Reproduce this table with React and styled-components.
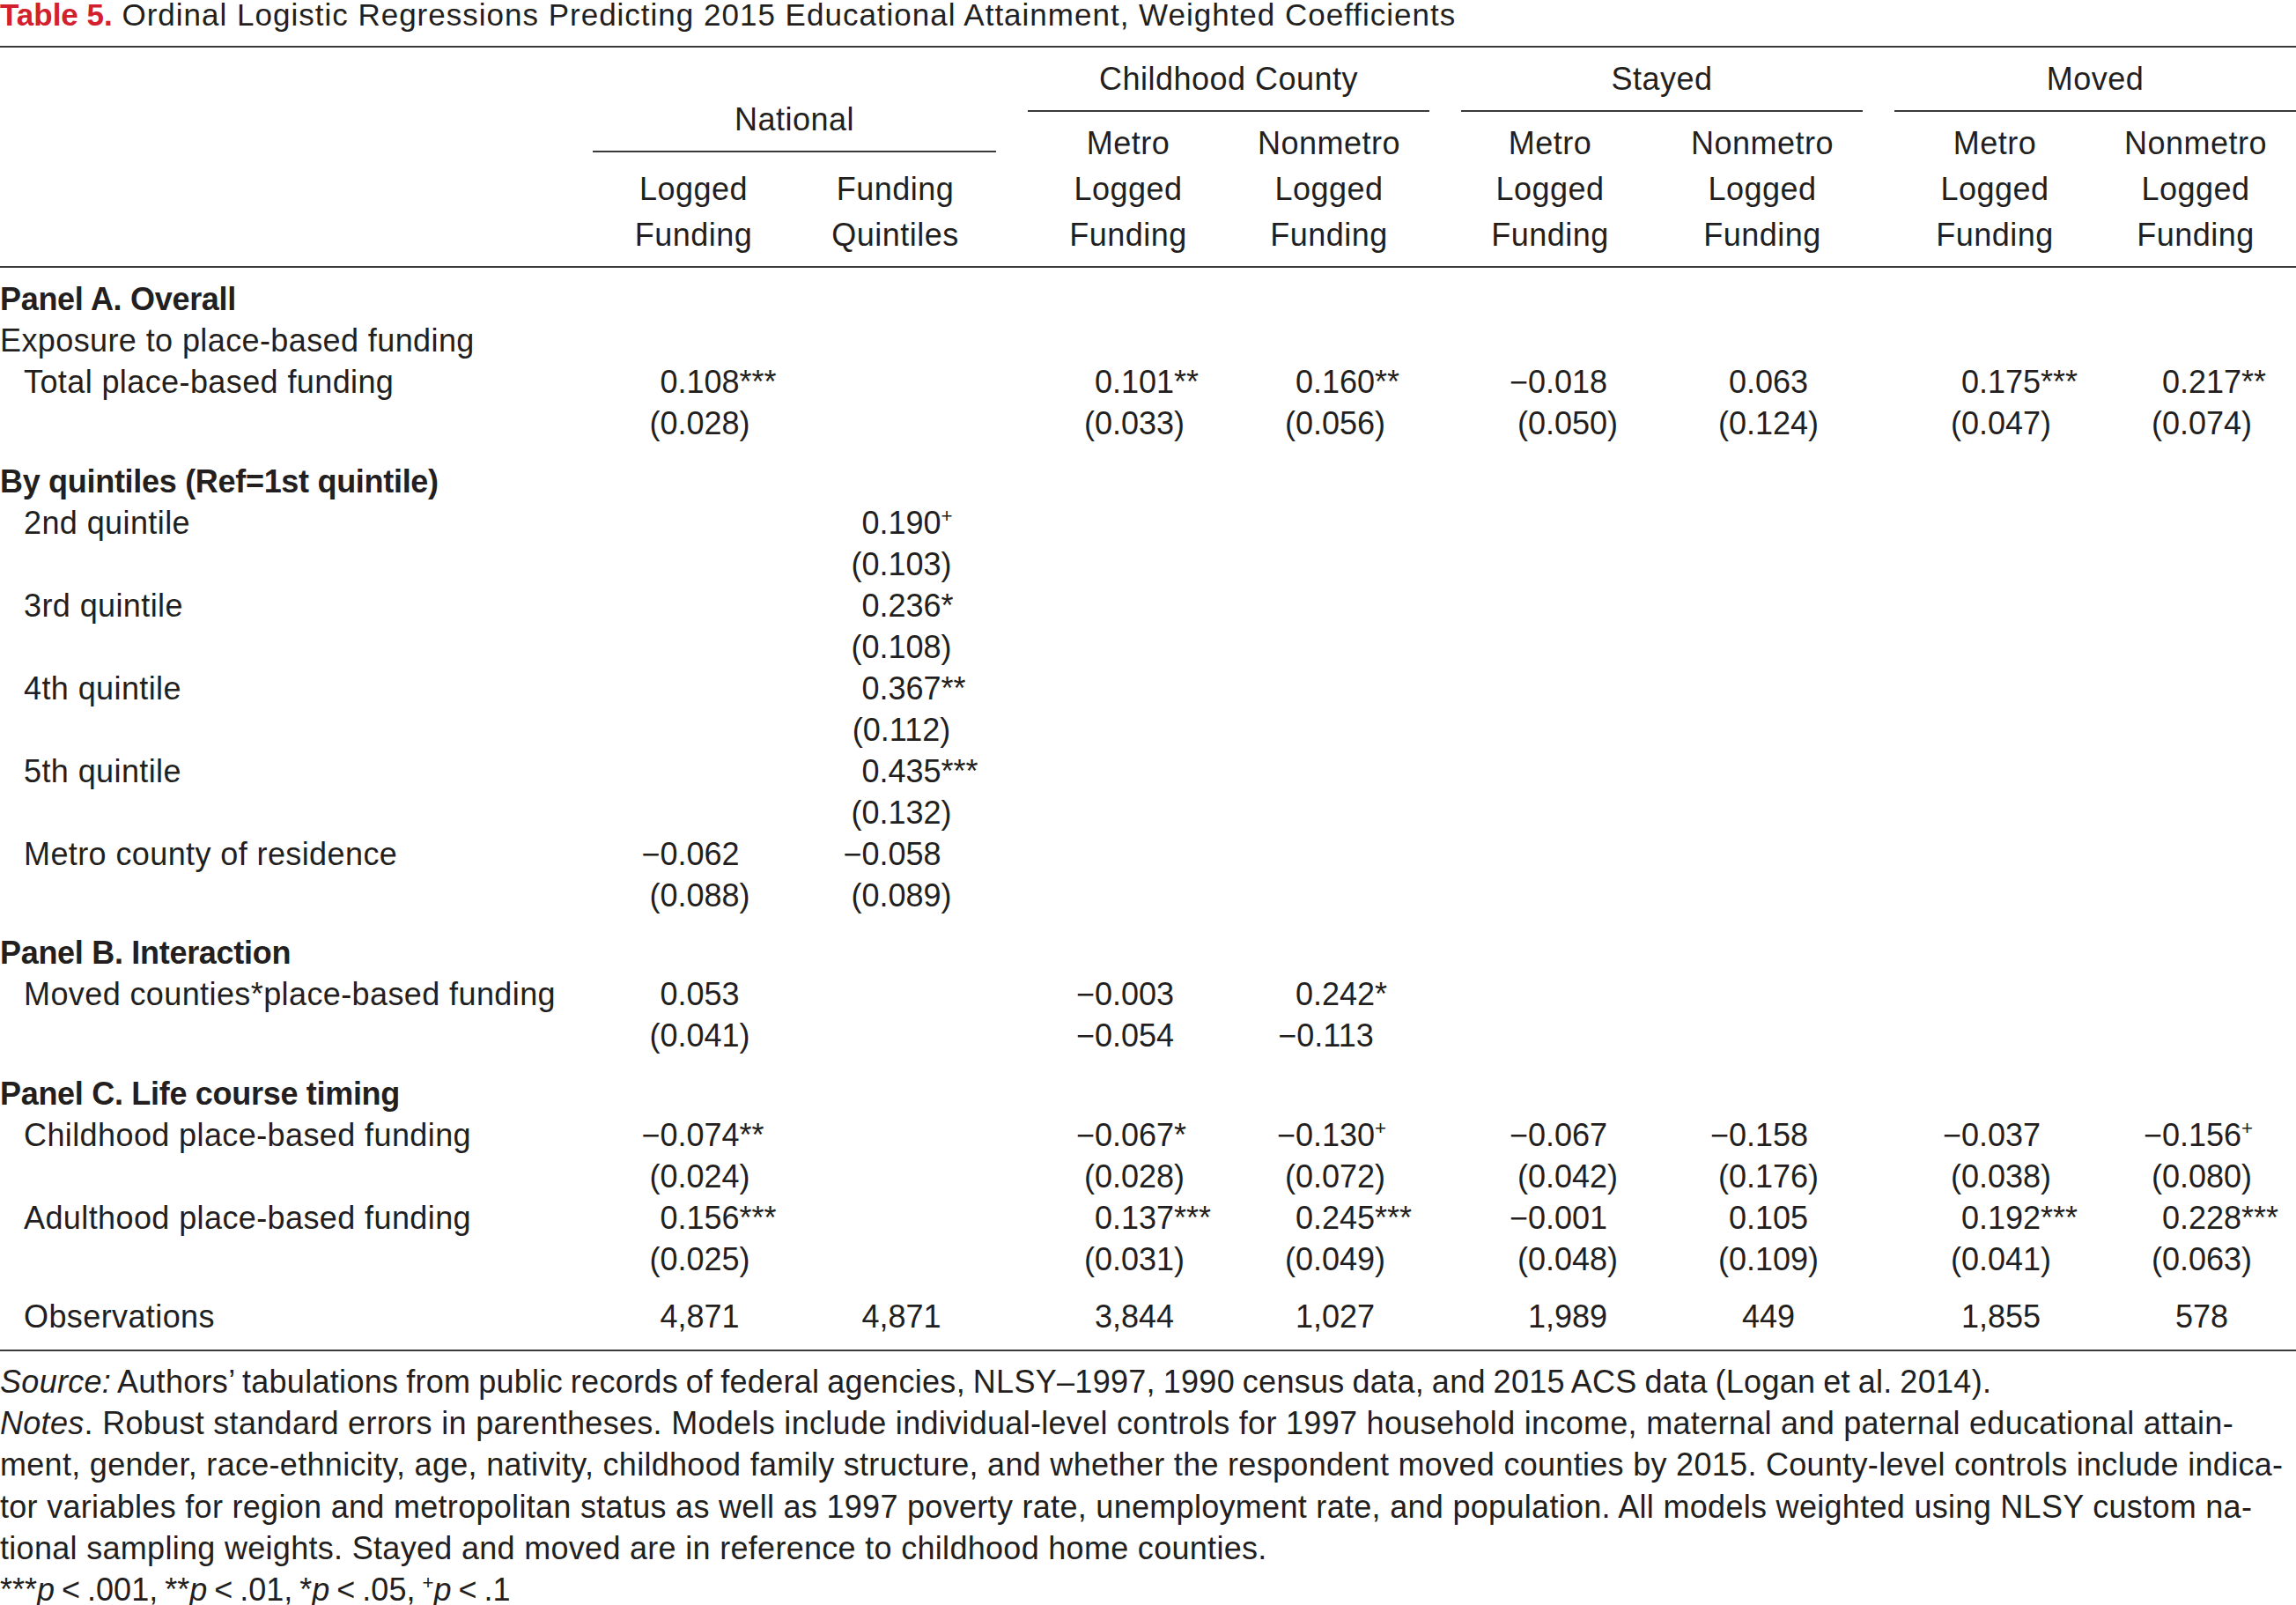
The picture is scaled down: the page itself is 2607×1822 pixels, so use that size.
import styled, { createGlobalStyle } from 'styled-components';

const GlobalStyle = createGlobalStyle`
  html, body {
    margin: 0;
    padding: 0;
    background: #fff;
  }
  body {
    font-family: 'Liberation Sans', Arial, sans-serif;
    color: #231f20;
  }
`;

// label column, then four groups of two columns with a spacer between groups
const COLS = '673px 229px 229px 36px 228px 228px 36px 228px 228px 36px 228px 228px';
const VALUE_COLS = [2, 3, 5, 6, 8, 9, 11, 12];

const Page = styled.div`
  width: 2607px;
`;

const Title = styled.h1`
  margin: 0 0 18px;
  font-size: 35px;
  line-height: 34px;
  font-weight: 400;
  letter-spacing: 1px;
  white-space: nowrap;
`;

const TableNo = styled.span`
  color: #d2202f;
  font-weight: 700;
  letter-spacing: 0;
`;

const Table = styled.div`
  border-top: 2px solid #3a3a3a;
  border-bottom: 2px solid #3a3a3a;
`;

const Head = styled.div`
  display: grid;
  grid-template-columns: ${COLS};
  grid-template-rows: auto 52px 52px 52px;
  padding-bottom: 9px;
  border-bottom: 2px solid #3a3a3a;
  font-size: 36px;
  letter-spacing: 0.5px;
  text-align: center;
`;

const GroupHead = styled.div`
  grid-column: ${(p) => p.$col} / span 2;
  grid-row: ${(p) => p.$row};
  align-self: end;
  padding: 12px 0 12px;
  margin-bottom: ${(p) => p.$drop || 0}px;
  line-height: 47px;
  border-bottom: 2px solid #3a3a3a;
`;

const SubHead = styled.div`
  grid-column: ${(p) => p.$col};
  grid-row: ${(p) => p.$row};
  line-height: 52px;
  margin-left: ${(p) => p.$shift || 0}px;
`;

const Body = styled.div`
  padding: 12px 0 14px;
  font-size: 36px;
`;

const Section = styled.div`
  & + & {
    margin-top: 18.5px;
  }
`;

const Row = styled.div`
  display: grid;
  grid-template-columns: ${COLS};
  height: 47px;
  line-height: 47px;
`;

const Label = styled.div`
  grid-column: 1;
  padding-left: ${(p) => (p.$indent ? 27 : 0)}px;
  font-weight: ${(p) => (p.$bold ? 700 : 400)};
  letter-spacing: ${(p) => (p.$bold ? -0.3 : 0.4)}px;
  white-space: nowrap;
`;

const ValueCell = styled.div`
  grid-column: ${(p) => p.$col};
  display: grid;
  grid-template-columns: 1fr auto 1fr;
  padding-left: 14px;
  white-space: nowrap;
`;

const Pre = styled.span`
  text-align: right;
`;

const Suf = styled.span`
  text-align: left;
`;

const Sup = styled.sup`
  font-size: 0.62em;
  line-height: 0;
  vertical-align: 0.6em;
`;

const Notes = styled.div`
  padding-top: 11px;
  font-size: 36px;
  line-height: 47.2px;
`;

const NoteLine = styled.div`
  white-space: nowrap;
  letter-spacing: ${(p) => p.$ls ?? 0.3}px;
  word-spacing: ${(p) => p.$ws ?? 0}px;
`;

function Value({ text, col }) {
  const m = text.match(/^(-?)([^*+]+)(\**)(\+?)$/);
  const [, minus, core, stars, plus] = m;
  return (
    <ValueCell $col={col}>
      <Pre>{minus ? '\u2212' : ''}</Pre>
      <span>{core}</span>
      <Suf>
        {stars}
        {plus && <Sup>+</Sup>}
      </Suf>
    </ValueCell>
  );
}

function DataRow({ label, indent, bold, values = [] }) {
  return (
    <Row>
      <Label $indent={indent} $bold={bold}>
        {label}
      </Label>
      {values.map((v, i) =>
        v ? <Value key={i} text={v} col={VALUE_COLS[i]} /> : null
      )}
    </Row>
  );
}

const sections = [
  [
    { label: 'Panel A. Overall', bold: true },
    { label: 'Exposure to place-based funding' },
    {
      label: 'Total place-based funding',
      indent: true,
      values: ['0.108***', '', '0.101**', '0.160**', '-0.018', '0.063', '0.175***', '0.217**'],
    },
    { values: ['(0.028)', '', '(0.033)', '(0.056)', '(0.050)', '(0.124)', '(0.047)', '(0.074)'] },
  ],
  [
    { label: 'By quintiles (Ref=1st quintile)', bold: true },
    { label: '2nd quintile', indent: true, values: ['', '0.190+'] },
    { values: ['', '(0.103)'] },
    { label: '3rd quintile', indent: true, values: ['', '0.236*'] },
    { values: ['', '(0.108)'] },
    { label: '4th quintile', indent: true, values: ['', '0.367**'] },
    { values: ['', '(0.112)'] },
    { label: '5th quintile', indent: true, values: ['', '0.435***'] },
    { values: ['', '(0.132)'] },
    { label: 'Metro county of residence', indent: true, values: ['-0.062', '-0.058'] },
    { values: ['(0.088)', '(0.089)'] },
  ],
  [
    { label: 'Panel B. Interaction', bold: true },
    {
      label: 'Moved counties*place-based funding',
      indent: true,
      values: ['0.053', '', '-0.003', '0.242*'],
    },
    { values: ['(0.041)', '', '-0.054', '-0.113'] },
  ],
  [
    { label: 'Panel C. Life course timing', bold: true },
    {
      label: 'Childhood place-based funding',
      indent: true,
      values: ['-0.074**', '', '-0.067*', '-0.130+', '-0.067', '-0.158', '-0.037', '-0.156+'],
    },
    { values: ['(0.024)', '', '(0.028)', '(0.072)', '(0.042)', '(0.176)', '(0.038)', '(0.080)'] },
    {
      label: 'Adulthood place-based funding',
      indent: true,
      values: ['0.156***', '', '0.137***', '0.245***', '-0.001', '0.105', '0.192***', '0.228***'],
    },
    { values: ['(0.025)', '', '(0.031)', '(0.049)', '(0.048)', '(0.109)', '(0.041)', '(0.063)'] },
  ],
  [
    {
      label: 'Observations',
      indent: true,
      values: ['4,871', '4,871', '3,844', '1,027', '1,989', '449', '1,855', '578'],
    },
  ],
];

const groups = [
  { name: 'Childhood County', col: 5, shift: 0 },
  { name: 'Stayed', col: 8, shift: -26 },
  { name: 'Moved', col: 11, shift: 0 },
];

export default function App() {
  return (
    <Page>
      <GlobalStyle />
      <Title>
        <TableNo>Table 5.</TableNo> Ordinal Logistic Regressions Predicting 2015 Educational
        Attainment, Weighted Coefficients
      </Title>

      <Table>
        <Head>
          <GroupHead $col={2} $row="1 / span 2" $drop={16}>
            National
          </GroupHead>
          <SubHead $col={2} $row={3}>Logged</SubHead>
          <SubHead $col={2} $row={4}>Funding</SubHead>
          <SubHead $col={3} $row={3}>Funding</SubHead>
          <SubHead $col={3} $row={4}>Quintiles</SubHead>

          {groups.map((g) => (
            <GroupHead key={g.name} $col={g.col} $row={1} $drop={10}>
              {g.name}
            </GroupHead>
          ))}
          {groups.flatMap((g) =>
            ['Metro', 'Nonmetro'].map((kind, i) => [
              <SubHead key={g.name + kind + 1} $col={g.col + i} $row={2} $shift={i ? 0 : g.shift}>
                {kind}
              </SubHead>,
              <SubHead key={g.name + kind + 2} $col={g.col + i} $row={3} $shift={i ? 0 : g.shift}>
                Logged
              </SubHead>,
              <SubHead key={g.name + kind + 3} $col={g.col + i} $row={4} $shift={i ? 0 : g.shift}>
                Funding
              </SubHead>,
            ])
          )}
        </Head>

        <Body>
          {sections.map((rows, si) => (
            <Section key={si}>
              {rows.map((r, ri) => (
                <DataRow key={ri} {...r} />
              ))}
            </Section>
          ))}
        </Body>
      </Table>

      <Notes>
        <NoteLine $ws={-1.5}>
          <i>Source:</i> Authors’ tabulations from public records of federal agencies, NLSY–1997,
          1990 census data, and 2015 ACS data (Logan et al. 2014).
        </NoteLine>
        <NoteLine>
          <i>Notes</i>. Robust standard errors in parentheses. Models include individual-level
          controls for 1997 household income, maternal and paternal educational attain-
        </NoteLine>
        <NoteLine>
          ment, gender, race-ethnicity, age, nativity, childhood family structure, and whether the
          respondent moved counties by 2015. County-level controls include indica-
        </NoteLine>
        <NoteLine>
          tor variables for region and metropolitan status as well as 1997 poverty rate,
          unemployment rate, and population. All models weighted using NLSY custom na-
        </NoteLine>
        <NoteLine>
          tional sampling weights. Stayed and moved are in reference to childhood home counties.
        </NoteLine>
        <NoteLine $ls={0} $ws={-2}>
          ***<i>p</i> &lt; .001, **<i>p</i> &lt; .01, *<i>p</i> &lt; .05, <Sup>+</Sup>
          <i>p</i> &lt; .1
        </NoteLine>
      </Notes>
    </Page>
  );
}
